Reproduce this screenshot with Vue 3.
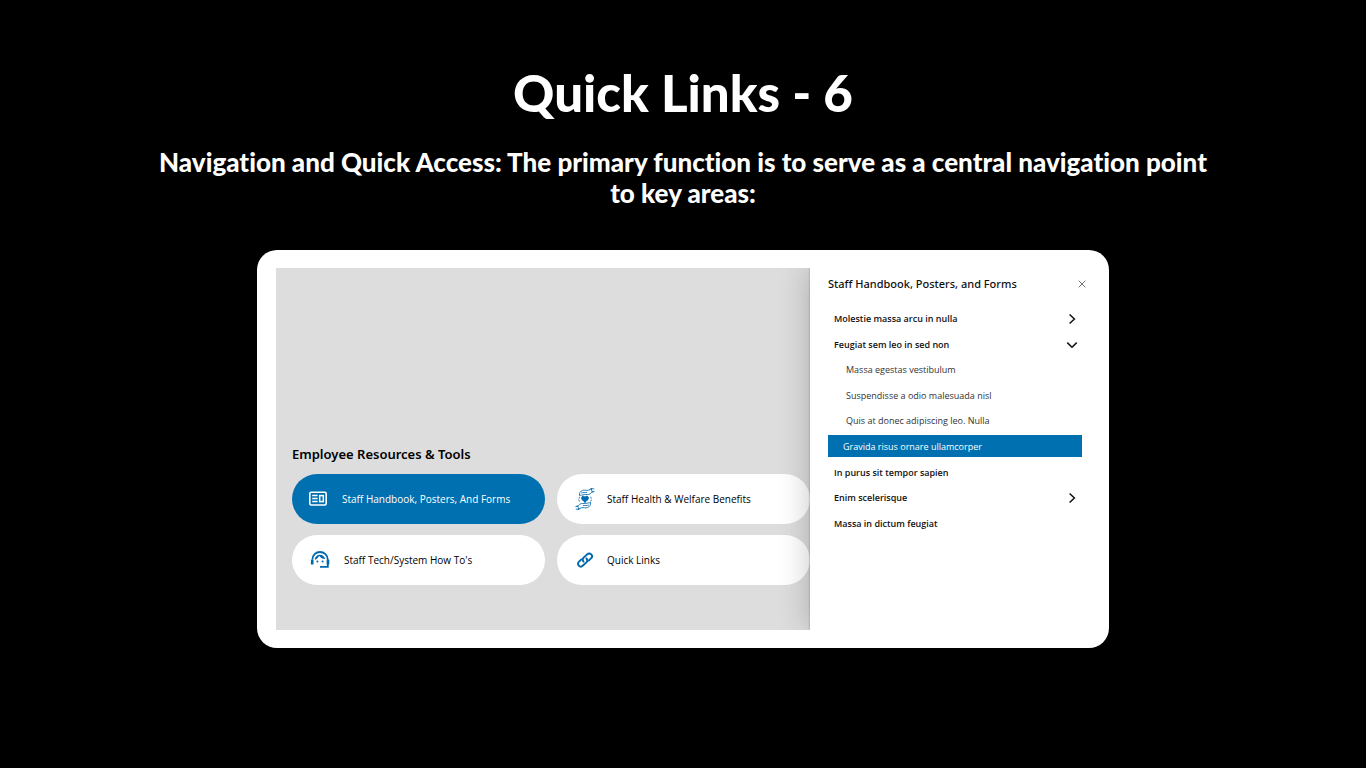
<script setup>
import { ref } from 'vue'

const tools = [
  { id: 'handbook', label: 'Staff Handbook, Posters, And Forms' },
  { id: 'health', label: 'Staff Health & Welfare Benefits' },
  { id: 'tech', label: "Staff Tech/System How To's" },
  { id: 'links', label: 'Quick Links' },
]
const active = ref('handbook')

const entries = [
  { label: 'Molestie massa arcu in nulla', kind: 'top', arrow: 'right' },
  { label: 'Feugiat sem leo in sed non', kind: 'top', arrow: 'down' },
  { label: 'Massa egestas vestibulum', kind: 'sub' },
  { label: 'Suspendisse a odio malesuada nisl', kind: 'sub' },
  { label: 'Quis at donec adipiscing leo. Nulla', kind: 'sub' },
  { label: 'Gravida risus ornare ullamcorper', kind: 'current' },
  { label: 'In purus sit tempor sapien', kind: 'top' },
  { label: 'Enim scelerisque', kind: 'top', arrow: 'right' },
  { label: 'Massa in dictum feugiat', kind: 'top' },
]
</script>

<template>
  <main class="page">
    <h1 class="title">Quick Links - 6</h1>
    <p class="lead">Navigation and Quick Access: The primary function is to serve as a central navigation point to key areas:</p>

    <section class="card">
      <div class="screen">
        <div class="stage">
          <h2 class="stage-title">Employee Resources &amp; Tools</h2>
          <div class="tools">
            <button
              v-for="tool in tools"
              :key="tool.id"
              type="button"
              class="tool"
              :class="[tool.id, { active: tool.id === active }]"
              @click="active = tool.id"
            >
              <svg v-if="tool.id === 'handbook'" class="icon" viewBox="0 0 20 20" fill="none" stroke="currentColor">
                <rect x="1.8" y="3.2" width="16.4" height="12.8" rx="1.4" stroke-width="1.6" />
                <path d="M4.2 6.600h5.400M4.2 9.600h5.400M4.2 12.600h5.400" stroke-width="1.5" />
                <rect x="11.700" y="6.600" width="3.600" height="6" stroke-width="1.5" />
              </svg>
              <svg v-else-if="tool.id === 'health'" class="icon" viewBox="0 0 20 22" fill="none" stroke="currentColor" stroke-width="0.85" stroke-linecap="round" stroke-linejoin="round">
                <path d="M10 14.2C7.6 12.5 6.6 11.3 6.6 9.9c0-1.9 2.4-2.4 3.4-.7 1-1.7 3.4-1.2 3.4.7 0 1.4-1 2.6-3.4 4.3z" fill="currentColor" />
                <path d="M4.5 7.2c-.4-2 .8-4 3-4.8 1.600-.7 4 .3 5.800-.1 1.300-.3 2-1.200 3.200-1.500M4.500 7.200c1.400.5 3.300-.5 4.800-.7 2.200-.2 4.200.5 5.800-.7 1-.8 1.400-1.800 3-2.100M6.600 4.900c1.700-.8 3.400-.2 5.100-.4M16.200.6l1 3.500 2-.6M16.200.6l2.600.3" />
                <path d="M15.500 14.800c.4 2-.8 4-3 4.800-1.600.7-4-.3-5.800.1-1.300.3-2 1.200-3.200 1.500M15.500 14.800c-1.400-.5-3.300.5-4.800.7-2.200.2-4.200-.5-5.800.7-1 .8-1.400 1.800-3 2.100M13.400 17.100c-1.700.8-3.400.2-5.100.4M3.800 21.400l-1-3.500-2 .6M3.800 21.400l-2.600-.3" />
                <path d="M4.600 9.200l-.5 1M4 12l.3 1.200M15.800 9.200l.4 1M16.200 12l-.3 1.200" />
              </svg>
              <svg v-else-if="tool.id === 'tech'" class="icon" viewBox="0 0 20 20" fill="none" stroke="currentColor">
                <path d="M2.300 9.700C2.400 5.300 5.800 2 10 2s7.700 3.300 7.800 7.700v7.200H10" stroke-width="1.800" />
                <path d="M2.200 9.800v4.600M18 9.800v4.600" stroke-width="2.600" />
                <path d="M4.800 9.800C5 6.700 7.200 4.700 10 4.700c2.500 0 4.600 1.800 5.100 4.200-2.600.1-4.800-1.200-6-3.200-.7 1.900-2.200 3.400-4.300 4.100z" fill="currentColor" stroke="none" />
                <circle cx="7.400" cy="11.500" r="1" fill="currentColor" stroke="none" />
                <circle cx="12.600" cy="11.500" r="1" fill="currentColor" stroke="none" />
              </svg>
              <svg v-else class="icon" viewBox="0 0 20 20" fill="none" stroke="currentColor" stroke-width="1.900" stroke-linecap="round" stroke-linejoin="round">
                <path d="M8.600 11.700a2.900 2.900 0 0 1 0-4.100l3.700-3.300a2.750 2.750 0 0 1 3.900 3.900l-2.500 2.400" />
                <path d="M11.400 8.300a2.900 2.900 0 0 1 0 4.100l-3.700 3.300a2.750 2.750 0 0 1-3.900-3.900l2.500-2.400" />
              </svg>
              <span>{{ tool.label }}</span>
            </button>
          </div>
        </div>

        <aside class="panel">
          <header class="panel-head">
            <h3 class="panel-title">Staff Handbook, Posters, and Forms</h3>
            <button type="button" class="close" aria-label="Close">
              <svg viewBox="0 0 8 8" fill="none" stroke="currentColor" stroke-width="0.7"><path d="M.7.7l6.600 6.600M7.300.7L.7 7.300" /></svg>
            </button>
          </header>
          <ul class="menu">
            <li v-for="entry in entries" :key="entry.label">
              <a href="#" class="entry" :class="entry.kind" @click.prevent>
                <span>{{ entry.label }}</span>
                <svg v-if="entry.arrow" class="arrow" viewBox="0 0 12 12" fill="none" stroke="currentColor" stroke-width="1.500">
                  <path v-if="entry.arrow === 'right'" d="M3.600 1.500L8.400 6l-4.800 4.500" />
                  <path v-else d="M1.300 3.600L6 8.300l4.700-4.700" />
                </svg>
              </a>
            </li>
          </ul>
        </aside>
      </div>
    </section>
  </main>
</template>

<style>
body {
  background: #000;
}
</style>

<style scoped>
.page {
  box-sizing: border-box;
  min-height: 100vh;
  padding: 63px 24px 48px;
  display: flex;
  flex-direction: column;
  align-items: center;
  background: #000;
  color: #fff;
  font-family: Lato, "Open Sans", sans-serif;
  font-variant-ligatures: none;
}
.title {
  margin: 0;
  font-size: 51px;
  line-height: 60px;
  font-weight: 900;
}
.lead {
  margin: 24px 0 0;
  max-width: 1060px;
  font-size: 26px;
  line-height: 31px;
  font-weight: 900;
  text-align: center;
}
.card {
  box-sizing: border-box;
  width: 100%;
  max-width: 852px;
  margin-top: 41px;
  padding: 18px 18px 18px 19px;
  border-radius: 20px;
  background: #fff;
  color: #111;
  font-family: "Open Sans", "Noto Sans", sans-serif;
}
.screen {
  display: grid;
  grid-template-columns: 534fr 281fr;
  min-height: 362px;
  overflow: hidden;
}
.stage {
  display: flex;
  flex-direction: column;
  justify-content: flex-end;
  padding: 0 0 45px 16px;
  background: #ddd;
}
.stage-title {
  margin: 0;
  font-family: "Noto Sans", "Open Sans", sans-serif;
  font-size: 13px;
  line-height: 18px;
  font-weight: 600;
  color: #000;
}
.tools {
  display: grid;
  grid-template-columns: 1fr 1fr;
  gap: 11px 12px;
  margin-top: 11px;
}
.tool {
  display: flex;
  align-items: center;
  gap: 12px;
  height: 50px;
  padding: 0 18px;
  border: 0;
  border-radius: 25px;
  background: #fff;
  color: #000;
  font-family: inherit;
  font-size: 10px;
  line-height: 16px;
  text-align: left;
}
.tool.active {
  padding-left: 16px;
  background: #0070b0;
  color: #fff;
}
.icon {
  flex: none;
  width: 20px;
  height: 22px;
  color: #0068ad;
}
.tool.handbook,
.tool.tech {
  gap: 14px;
}
.active .icon {
  color: #fff;
}
.panel {
  position: relative;
  padding: 6px 9px 0 18px;
  background: #fff;
  box-shadow: 0 0 2px rgba(0, 0, 0, 0.3), 0 0 30px rgba(0, 0, 0, 0.24);
}
.panel-head {
  display: flex;
  align-items: center;
  justify-content: space-between;
  height: 20px;
}
.panel-title {
  margin: 0;
  font-family: "Noto Sans", "Open Sans", sans-serif;
  font-size: 11px;
  line-height: 16px;
  font-weight: 500;
}
.close {
  display: flex;
  width: 8px;
  height: 8px;
  margin-right: -4px;
  padding: 0;
  border: 0;
  background: none;
  color: #333;
}
.close svg {
  width: 8px;
  height: 8px;
}
.menu {
  display: grid;
  grid-auto-rows: 1fr;
  gap: 3px;
  height: 227px;
  margin: 13px 0 0;
  padding: 0;
  list-style: none;
}
.menu li {
  display: grid;
}
.entry {
  display: flex;
  align-items: center;
  justify-content: space-between;
  padding: 2px 4px 0 6px;
  color: #111;
  font-size: 9px;
  line-height: 14px;
  font-weight: 600;
  text-decoration: none;
}
.entry.sub {
  padding-left: 18px;
  color: #333;
  font-weight: 400;
}
.entry.current {
  padding-left: 15px;
  background: #0070b0;
  color: #fff;
  font-weight: 400;
}
.arrow {
  width: 12px;
  height: 12px;
}
</style>
